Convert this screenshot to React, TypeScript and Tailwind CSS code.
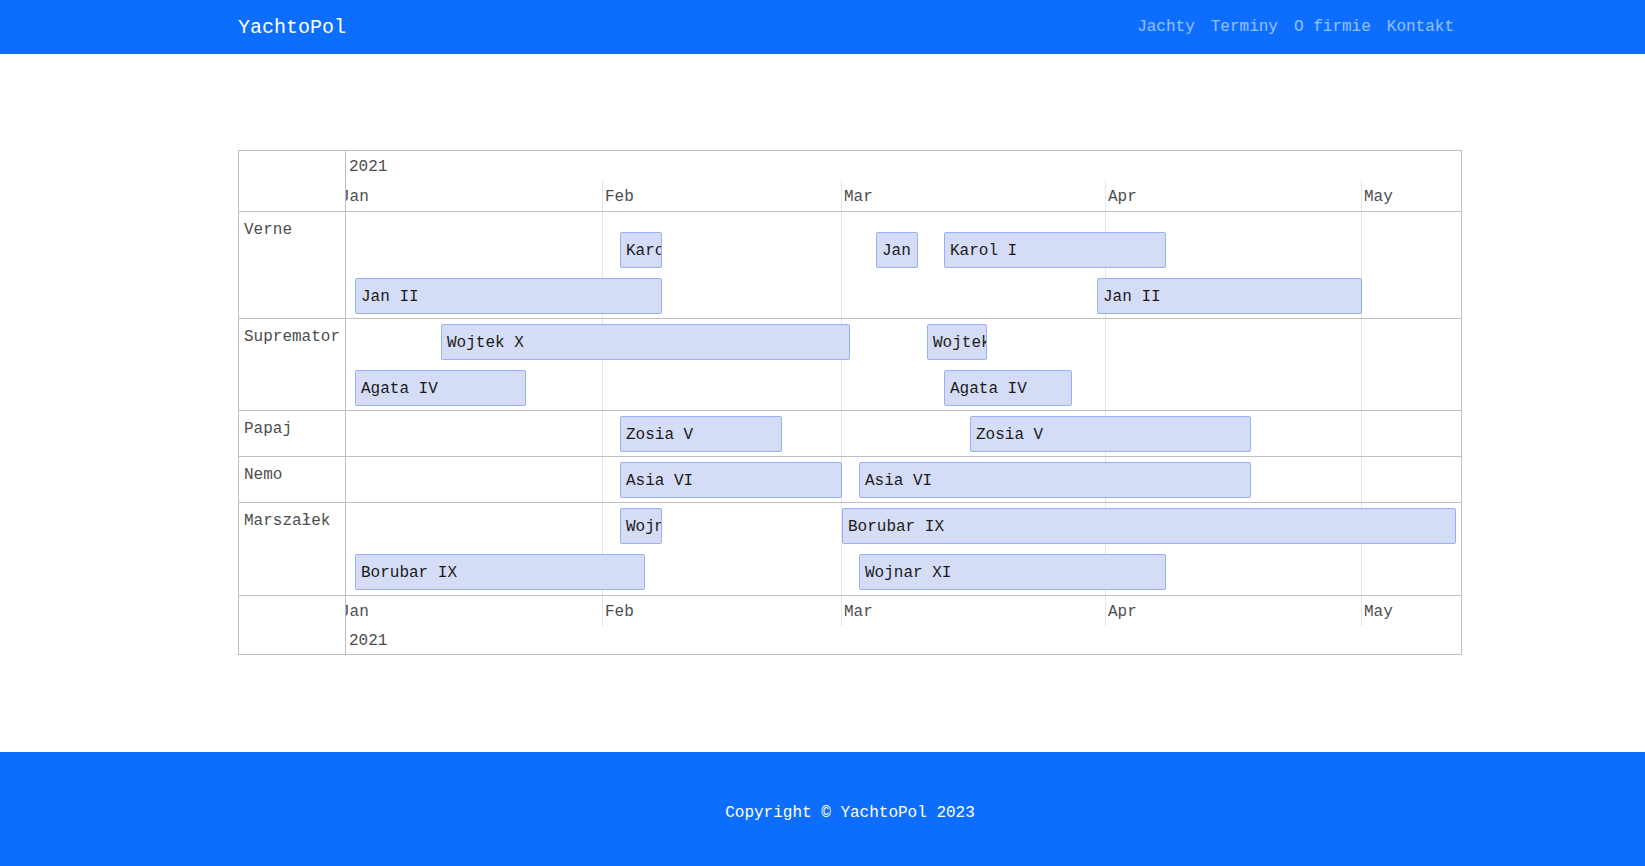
import React from "react";

type Bar = { label: string; s: number; e: number };
type Row = { name: string; pt: string; pb: string; lanes: Bar[][] };

// day offsets counted from 1 Feb 2021, position inside the timeline area
const SCALE = 8.529;
const X0 = 256.79;
const pos = (d: number) => X0 + d * SCALE;
const lineX = (d: number) => Math.floor(pos(d) - 0.5);

const months = [
  { name: "Jan", d: -31 },
  { name: "Feb", d: 0 },
  { name: "Mar", d: 28 },
  { name: "Apr", d: 59 },
  { name: "May", d: 89 },
];

const rows: Row[] = [
  {
    name: "Verne",
    pt: "pt-[20px]",
    pb: "pb-[4px]",
    lanes: [
      [
        { label: "Karol I", s: 2, e: 7 },
        { label: "Jan II", s: 32, e: 37 },
        { label: "Karol I", s: 40, e: 66 },
      ],
      [
        { label: "Jan II", s: -29, e: 7 },
        { label: "Jan II", s: 58, e: 89 },
      ],
    ],
  },
  {
    name: "Supremator",
    pt: "pt-[5px]",
    pb: "pb-[4px]",
    lanes: [
      [
        { label: "Wojtek X", s: -19, e: 29 },
        { label: "Wojtek X", s: 38, e: 45 },
      ],
      [
        { label: "Agata IV", s: -29, e: -9 },
        { label: "Agata IV", s: 40, e: 55 },
      ],
    ],
  },
  {
    name: "Papaj",
    pt: "pt-[5px]",
    pb: "pb-[4px]",
    lanes: [
      [
        { label: "Zosia V", s: 2, e: 21 },
        { label: "Zosia V", s: 43, e: 76 },
      ],
    ],
  },
  {
    name: "Nemo",
    pt: "pt-[5px]",
    pb: "pb-[4px]",
    lanes: [
      [
        { label: "Asia VI", s: 2, e: 28 },
        { label: "Asia VI", s: 30, e: 76 },
      ],
    ],
  },
  {
    name: "Marszałek",
    pt: "pt-[5px]",
    pb: "pb-[5px]",
    lanes: [
      [
        { label: "Wojnar XI", s: 2, e: 7 },
        { label: "Borubar IX", s: 28, e: 100 },
      ],
      [
        { label: "Borubar IX", s: -29, e: 5 },
        { label: "Wojnar XI", s: 30, e: 66 },
      ],
    ],
  },
];

function GridLines() {
  return (
    <>
      {months.map((m) => (
        <div
          key={m.name}
          className="absolute top-0 bottom-0 w-px bg-[#e5e5e5]"
          style={{ left: lineX(m.d) }}
        />
      ))}
    </>
  );
}

function MonthRow() {
  return (
    <div className="relative h-[30px]">
      <GridLines />
      {months.map((m) => (
        <div
          key={m.name}
          className="absolute top-0 h-[30px] pl-[3px] leading-[32px] text-[#4d4d4d] whitespace-nowrap"
          style={{ left: lineX(m.d) }}
        >
          {m.name}
        </div>
      ))}
    </div>
  );
}

function LabelCell({ children }: { children?: React.ReactNode }) {
  return (
    <div className="w-[107px] shrink-0 border-r border-[#bfbfbf] pl-[5px] pt-[6px] leading-[24px] text-[#4d4d4d] whitespace-nowrap">
      {children}
    </div>
  );
}

function BarBox({ bar }: { bar: Bar }) {
  const left = Math.round(pos(bar.s));
  const width = Math.round(pos(bar.e)) - left;
  return (
    <div
      className="absolute top-0 h-[36px] box-border overflow-hidden whitespace-nowrap rounded-[2px] border border-[#97b0f8] bg-[#d5ddf6] px-[5px] leading-[36px] text-[#1a1a1a]"
      style={{ left, width }}
    >
      {bar.label}
    </div>
  );
}

export default function App() {
  return (
    <div className="min-h-screen bg-white font-['Liberation_Mono',monospace] text-[16px]">
      <header className="h-[54px] bg-[#0d6efd]">
        <div className="ml-[238px] flex h-full w-[1224px] items-center justify-between">
          <span className="pt-[2px] text-[20px] leading-[30px] text-white">YachtoPol</span>
          <nav className="flex items-center">
            {["Jachty", "Terminy", "O firmie", "Kontakt"].map((l) => (
              <a key={l} className="px-2 leading-[24px] text-white/55 whitespace-pre">
                {l}
              </a>
            ))}
          </nav>
        </div>
      </header>

      <main className="pt-[96px]">
        <div className="ml-[238px] w-[1224px] border border-[#bfbfbf]">
          {/* top axis */}
          <div className="flex border-b border-[#bfbfbf]">
            <div className="w-[107px] shrink-0 border-r border-[#bfbfbf]" />
            <div className="relative flex-1 overflow-hidden">
              <div className="h-[30px] pl-[3px] leading-[32px] text-[#4d4d4d]">2021</div>
              <MonthRow />
            </div>
          </div>

          {rows.map((r) => (
            <div key={r.name} className="flex border-b border-[#bfbfbf]">
              <LabelCell>{r.name}</LabelCell>
              <div className={`relative flex-1 overflow-hidden ${r.pt} ${r.pb}`}>
                <GridLines />
                <div className="flex flex-col gap-[10px]">
                  {r.lanes.map((lane, i) => (
                    <div key={i} className="relative h-[36px]">
                      {lane.map((b, j) => (
                        <BarBox key={j} bar={b} />
                      ))}
                    </div>
                  ))}
                </div>
              </div>
            </div>
          ))}

          {/* bottom axis */}
          <div className="flex">
            <div className="w-[107px] shrink-0 border-r border-[#bfbfbf]" />
            <div className="relative flex-1 overflow-hidden">
              <MonthRow />
              <div className="h-[28px] pl-[3px] leading-[30px] text-[#4d4d4d]">2021</div>
            </div>
          </div>
        </div>
      </main>

      <footer className="mt-[97px] h-[115px] bg-[#0d6efd] pt-[49px]">
        <div className="ml-[238px] w-[1224px] text-center leading-[24px] text-white">
          Copyright © YachtoPol 2023
        </div>
      </footer>
    </div>
  );
}
